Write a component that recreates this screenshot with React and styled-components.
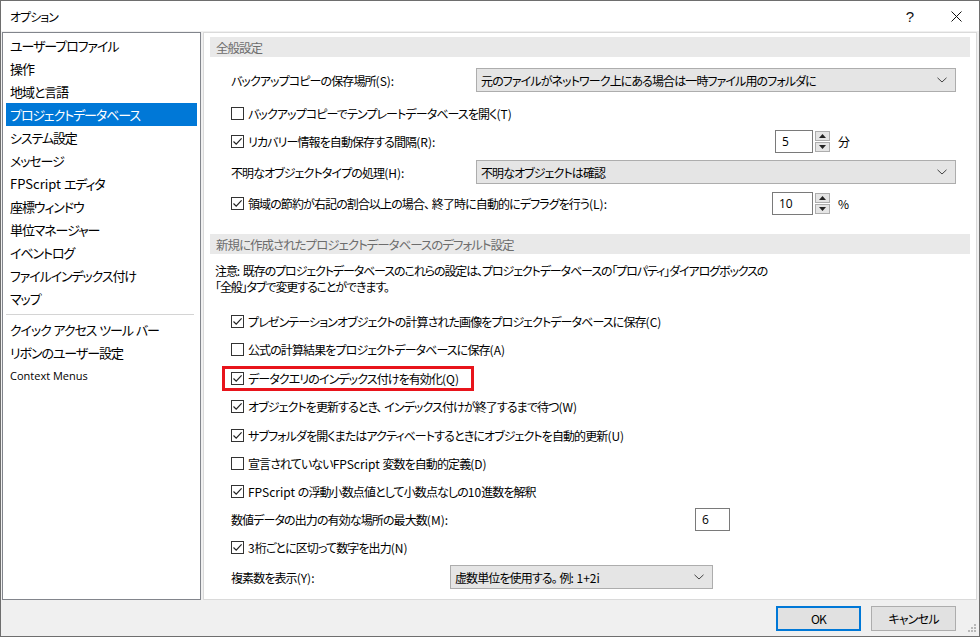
import React from "react";
import styled, { createGlobalStyle } from "styled-components";

const GlobalStyle = createGlobalStyle`
  html, body {
    margin: 0;
    padding: 0;
    background: #ffffff;
  }
  body {
    font-family: "Noto Sans CJK JP", "Noto Sans", sans-serif;
    font-size: 12px;
    color: #000;
    font-feature-settings: "palt";
  }
`;

const Window = styled.div`
  width: 980px;
  height: 637px;
  box-sizing: border-box;
  border: 1px solid #6e6e6e;
  background: #f0f0f0;
  display: flex;
  flex-direction: column;
  overflow: hidden;
`;

const TitleBar = styled.div`
  height: 30px;
  background: #ffffff;
  display: flex;
  align-items: center;
  padding-left: 9px;
  flex-shrink: 0;
`;

const Title = styled.div`
  flex: 1;
  font-size: 12px;
  letter-spacing: -1px;
`;

const TitleButton = styled.div`
  width: 46px;
  height: 30px;
  display: flex;
  align-items: center;
  justify-content: center;
  font-family: "Liberation Sans", sans-serif;
  font-size: 15px;
  color: #111;
`;

const Body = styled.div`
  flex: 1;
  display: flex;
  gap: 2px;
  padding: 1px 2px 0 1px;
  min-height: 0;
`;

const NavPanel = styled.div`
  width: 199px;
  height: 568px;
  box-sizing: border-box;
  border: 1px solid #82858c;
  background: #fff;
  padding: 1px 3px;
`;

const NavItem = styled.div`
  height: 23px;
  display: flex;
  align-items: center;
  padding-left: 4px;
  font-size: ${(p) => (p.$small ? "11px" : "13px")};
  font-family: ${(p) =>
    p.$small ? '"Open Sans", "Noto Sans", sans-serif' : "inherit"};
  letter-spacing: ${(p) => (p.$small ? "0" : "-1.1px")};
  background: ${(p) => (p.$active ? "#0078d7" : "transparent")};
  color: ${(p) => (p.$active ? "#fff" : "#000")};
  white-space: pre;
`;

const NavSeparator = styled.div`
  height: 8px;
  display: flex;
  align-items: center;
  &::after {
    content: "";
    flex: 1;
    margin-right: 3px;
    border-top: 1px solid #d4d4d4;
  }
`;

const SettingsPanel = styled.div`
  flex: 1;
  height: 568px;
  box-sizing: border-box;
  border: 1px solid #dadada;
  background: #fff;
  overflow: hidden;
`;

const SectionHeader = styled.div`
  margin: ${(p) => p.$mt}px 6px 0 6px;
  height: 20px;
  background: #e9e9e9;
  color: #6d6d6d;
  display: flex;
  align-items: center;
  padding-left: 6px;
  font-size: 12.5px;
  letter-spacing: -1px;
`;

const Row = styled.div`
  margin-top: ${(p) => p.$mt || 0}px;
  height: 28px;
  display: flex;
  align-items: center;
  padding-left: 27px;
  padding-right: 20px;
  white-space: pre;
  letter-spacing: -0.9px;
`;

const Latin = styled.span`
  letter-spacing: 0;
`;

const Label = styled.span`
  width: ${(p) => (p.$w ? `${p.$w}px` : "auto")};
  flex-shrink: 0;
`;

const Note = styled.div`
  margin-top: 9px;
  padding-left: 11px;
  line-height: 16px;
  letter-spacing: -1.1px;
`;

const CheckWrap = styled.label`
  display: flex;
  align-items: center;
  gap: 4px;
  width: ${(p) => (p.$w ? `${p.$w}px` : "auto")};
  flex-shrink: 0;
`;

const Box = styled.span`
  width: 13px;
  height: 13px;
  box-sizing: border-box;
  border: 1px solid #333;
  background: #fff;
  display: flex;
  align-items: center;
  justify-content: center;
  flex-shrink: 0;
`;

const Highlight = styled.div`
  display: flex;
  align-items: center;
  height: 25px;
  box-sizing: border-box;
  border: 3px solid #e8141b;
  margin-left: -9px;
  padding: 0 12px 0 6px;
`;

const Select = styled.div`
  width: ${(p) => p.$w}px;
  height: 24px;
  box-sizing: border-box;
  border: 1px solid #adadad;
  background: #e5e5e5;
  display: flex;
  align-items: center;
  padding-left: 4px;
  padding-right: 8px;
`;

const SelectText = styled.span`
  flex: 1;
`;

const SpinGroup = styled.div`
  display: flex;
  align-items: center;
  gap: 6px;
  letter-spacing: 0;
`;

const TextBox = styled.div`
  width: ${(p) => p.$w}px;
  height: 23px;
  box-sizing: border-box;
  border: 1px solid #7a7a7a;
  background: #fff;
  display: flex;
  align-items: center;
  padding-left: 6px;
  font-family: "Open Sans", "Noto Sans", sans-serif;
  font-size: 12px;
  letter-spacing: 0;
`;

const Spinner = styled.div`
  display: flex;
  flex-direction: column;
  gap: 1px;
  margin-left: -4px;
`;

const SpinButton = styled.div`
  width: 15px;
  height: 10px;
  box-sizing: border-box;
  border: 1px solid #adadad;
  background: #e5e5e5;
  display: flex;
  align-items: center;
  justify-content: center;
`;

const Unit = styled.span`
  margin-left: 2px;
`;

const Footer = styled.div`
  height: 36px;
  display: flex;
  align-items: center;
  justify-content: flex-end;
  gap: 10px;
  padding-right: 23px;
  position: relative;
  flex-shrink: 0;
`;

const Button = styled.div`
  width: 85px;
  height: 25px;
  box-sizing: border-box;
  border: ${(p) => (p.$default ? "2px solid #0078d7" : "1px solid #adadad")};
  background: #e1e1e1;
  display: flex;
  align-items: center;
  justify-content: center;
  font-size: 12px;
  letter-spacing: -0.8px;
`;

const Grip = styled.svg`
  position: absolute;
  right: 2px;
  bottom: 3px;
`;

// keep normal spacing on latin runs inside tightened japanese text
const jp = (text) =>
  text
    .split(/([A-Za-z0-9()+.: ]+)/)
    .filter(Boolean)
    .map((part, i) =>
      /[A-Za-z0-9()+.: ]/.test(part[0]) ? <Latin key={i}>{part}</Latin> : part
    );

const Check = () => (
  <svg width="11" height="11" viewBox="0 0 11 11">
    <path d="M1.5 5.5 L4.2 8.2 L9.6 2.4" fill="none" stroke="#222" strokeWidth="1.2" />
  </svg>
);

const CheckBox = ({ checked, children, w }) => (
  <CheckWrap $w={w}>
    <Box>{checked && <Check />}</Box>
    <span>{jp(children)}</span>
  </CheckWrap>
);

const Chevron = () => (
  <svg width="10" height="6" viewBox="0 0 10 6">
    <path d="M0.5 0.8 L5 5 L9.5 0.8" fill="none" stroke="#444" strokeWidth="1" />
  </svg>
);

const Arrow = ({ up }) => (
  <svg width="7" height="4" viewBox="0 0 7 4">
    <path d={up ? "M0 4 L3.5 0 L7 4 Z" : "M0 0 L3.5 4 L7 0 Z"} fill="#222" />
  </svg>
);

const Dropdown = ({ w, children }) => (
  <Select $w={w}>
    <SelectText>{jp(children)}</SelectText>
    <Chevron />
  </Select>
);

const SpinBox = ({ value, unit, w }) => (
  <SpinGroup>
    <TextBox $w={w}>{value}</TextBox>
    <Spinner>
      <SpinButton>
        <Arrow up />
      </SpinButton>
      <SpinButton>
        <Arrow />
      </SpinButton>
    </Spinner>
    <Unit>{unit}</Unit>
  </SpinGroup>
);

const navItems = [
  "ユーザープロファイル",
  "操作",
  "地域と言語",
  "プロジェクトデータベース",
  "システム設定",
  "メッセージ",
  "FPScript エディタ",
  "座標ウィンドウ",
  "単位マネージャー",
  "イベントログ",
  "ファイルインデックス付け",
  "マップ",
];

const App = () => {
  return (
    <>
      <GlobalStyle />
      <Window>
        <TitleBar>
          <Title>オプション</Title>
          <TitleButton>?</TitleButton>
          <TitleButton>
            <svg width="11" height="11" viewBox="0 0 11 11">
              <path d="M0.5 0.5 L10.5 10.5 M10.5 0.5 L0.5 10.5" stroke="#111" strokeWidth="1" />
            </svg>
          </TitleButton>
        </TitleBar>
        <Body>
          <NavPanel>
            {navItems.map((item) => (
              <NavItem key={item} $active={item === "プロジェクトデータベース"}>
                {jp(item)}
              </NavItem>
            ))}
            <NavSeparator />
            <NavItem>{jp("クイック アクセス ツール バー")}</NavItem>
            <NavItem>リボンのユーザー設定</NavItem>
            <NavItem $small>Context Menus</NavItem>
          </NavPanel>
          <SettingsPanel>
            <SectionHeader $mt={4}>全般設定</SectionHeader>
            <Row $mt={9}>
              <Label $w={245}>{jp("バックアップコピーの保存場所(S):")}</Label>
              <Dropdown w={481}>元のファイルがネットワーク上にある場合は一時ファイル用のフォルダに</Dropdown>
            </Row>
            <Row $mt={5}>
              <CheckBox>バックアップコピーでテンプレートデータベースを開く(T)</CheckBox>
            </Row>
            <Row>
              <CheckBox checked w={544}>
                リカバリー情報を自動保存する間隔(R):
              </CheckBox>
              <SpinBox value="5" unit="分" w={38} />
            </Row>
            <Row $mt={3}>
              <Label $w={245}>{jp("不明なオブジェクトタイプの処理(H):")}</Label>
              <Dropdown w={481}>不明なオブジェクトは確認</Dropdown>
            </Row>
            <Row $mt={3}>
              <CheckBox checked w={541}>
                領域の節約が右記の割合以上の場合、 終了時に自動的にデフラグを行う(L):
              </CheckBox>
              <SpinBox value="10" unit="%" w={41} />
            </Row>
            <SectionHeader $mt={17}>新規に作成されたプロジェクトデータベースのデフォルト設定</SectionHeader>
            <Note>
              {jp("注意: 既存のプロジェクトデータベースのこれらの設定は、プロジェクトデータベースの「プロパティ」ダイアログボックスの")}
              <br />
              「全般」タブで変更することができます。
            </Note>
            <Row $mt={12}>
              <CheckBox checked>プレゼンテーションオブジェクトの計算された画像をプロジェクトデータベースに保存(C)</CheckBox>
            </Row>
            <Row>
              <CheckBox>公式の計算結果をプロジェクトデータベースに保存(A)</CheckBox>
            </Row>
            <Row $mt={1}>
              <Highlight>
                <CheckBox checked>データクエリのインデックス付けを有効化(Q)</CheckBox>
              </Highlight>
            </Row>
            <Row>
              <CheckBox checked>オブジェクトを更新するとき、 インデックス付けが終了するまで待つ(W)</CheckBox>
            </Row>
            <Row $mt={1}>
              <CheckBox checked>サブフォルダを開くまたはアクティベートするときにオブジェクトを自動的更新(U)</CheckBox>
            </Row>
            <Row>
              <CheckBox>宣言されていないFPScript 変数を自動的定義(D)</CheckBox>
            </Row>
            <Row>
              <CheckBox checked>FPScript の浮動小数点値として小数点なしの10進数を解釈</CheckBox>
            </Row>
            <Row>
              <Label $w={464}>{jp("数値データの出力の有効な場所の最大数(M):")}</Label>
              <TextBox $w={35}>6</TextBox>
            </Row>
            <Row>
              <CheckBox checked>3桁ごとに区切って数字を出力(N)</CheckBox>
            </Row>
            <Row $mt={2}>
              <Label $w={219}>{jp("複素数を表示(Y):")}</Label>
              <Dropdown w={263}>虚数単位を使用する。 例: 1+2i</Dropdown>
            </Row>
          </SettingsPanel>
        </Body>
        <Footer>
          <Button $default>OK</Button>
          <Button>キャンセル</Button>
          <Grip width="12" height="12" viewBox="0 0 12 12">
            {[
              [9, 1],
              [6, 4],
              [9, 4],
              [3, 7],
              [6, 7],
              [9, 7],
            ].map(([x, y]) => (
              <rect key={`${x}-${y}`} x={x} y={y + 2} width="2" height="2" fill="#b8b8b8" />
            ))}
          </Grip>
        </Footer>
      </Window>
    </>
  );
};

export default App;
